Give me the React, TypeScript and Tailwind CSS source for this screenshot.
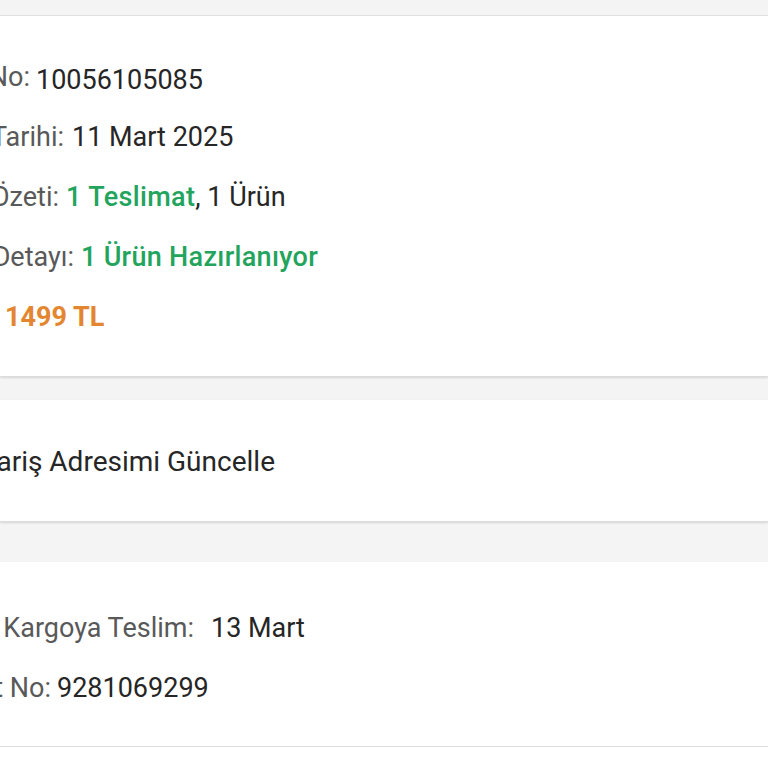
const font = { fontFamily: "Roboto, 'Noto Sans', sans-serif" };

type Row = {
  label: string;
  labelW: string;
  gap: string;
  value: React.ReactNode;
  shift?: string;
};

const orderRows: Row[] = [
  {
    label: "Sipariş No:",
    labelW: "w-[30px]",
    gap: "ml-[6px]",
    value: <span className="text-[#262626]">10056105085</span>,
    shift: "pt-[6px]",
  },
  {
    label: "Sipariş Tarihi:",
    labelW: "w-[64px]",
    gap: "ml-[8px]",
    value: <span className="text-[#262626]">11 Mart 2025</span>,
  },
  {
    label: "Sipariş Özeti:",
    labelW: "w-[59px]",
    gap: "ml-[7px]",
    value: (
      <span className="text-[#262626]">
        <span className="text-[#22a45d] font-medium tracking-[0.35px]">1 Teslimat</span>, 1 Ürün
      </span>
    ),
  },
  {
    label: "Sipariş Detayı:",
    labelW: "w-[74px]",
    gap: "ml-[7px]",
    value: (
      <span className="text-[#22a45d] font-medium tracking-[0.3px]">1 Ürün Hazırlanıyor</span>
    ),
  },
  {
    label: "Toplam Tutar:",
    labelW: "w-[0px]",
    gap: "ml-[5px]",
    value: <span className="text-[#e3862f] font-bold">1499 TL</span>,
  },
];

const shipRows: Row[] = [
  {
    label: "Tahmini Kargoya Teslim:",
    labelW: "w-[194px]",
    gap: "ml-[17px]",
    value: <span className="text-[#262626]">13 Mart</span>,
  },
  {
    label: "Paket No:",
    labelW: "w-[51px]",
    gap: "ml-[6px]",
    value: <span className="text-[#262626]">9281069299</span>,
  },
];

const InfoRow = ({ row }: { row: Row }) => {
  return (
    <div className="flex items-center h-[60px] whitespace-nowrap">
      <div className={`${row.labelW} shrink-0 flex justify-end`}>
        <span className="text-[#595959]">{row.label}</span>
      </div>
      <div className={`${row.gap} ${row.shift ?? ""}`}>{row.value}</div>
    </div>
  );
};

export default function App() {
  return (
    <div
      className="w-[768px] h-[768px] overflow-hidden bg-[#f4f4f4] text-[27px] leading-none"
      style={font}
    >
      <div className="h-[16px] border-b border-[#e2e2e2]" />

      <div className="bg-white pt-[31px] pb-[29px] shadow-[0_1px_2px_rgba(0,0,0,0.12)] border-b border-[#dcdcdc]">
        {orderRows.map((row) => (
          <InfoRow key={row.label} row={row} />
        ))}
      </div>

      <div className="h-[23px]" />

      <div className="bg-white h-[122px] flex items-center pt-[3px] shadow-[0_1px_2px_rgba(0,0,0,0.12)] border-b border-[#dcdcdc] whitespace-nowrap">
        <div className="w-[275px] shrink-0 flex justify-end">
          <span className="text-[#262626] text-[28px]">Sipariş Adresimi Güncelle</span>
        </div>
      </div>

      <div className="h-[40px]" />

      <div className="bg-white pt-[36px] pb-[28px] border-b border-[#dedede]">
        {shipRows.map((row) => (
          <InfoRow key={row.label} row={row} />
        ))}
      </div>

      <div className="bg-white h-[40px]" />
    </div>
  );
}
